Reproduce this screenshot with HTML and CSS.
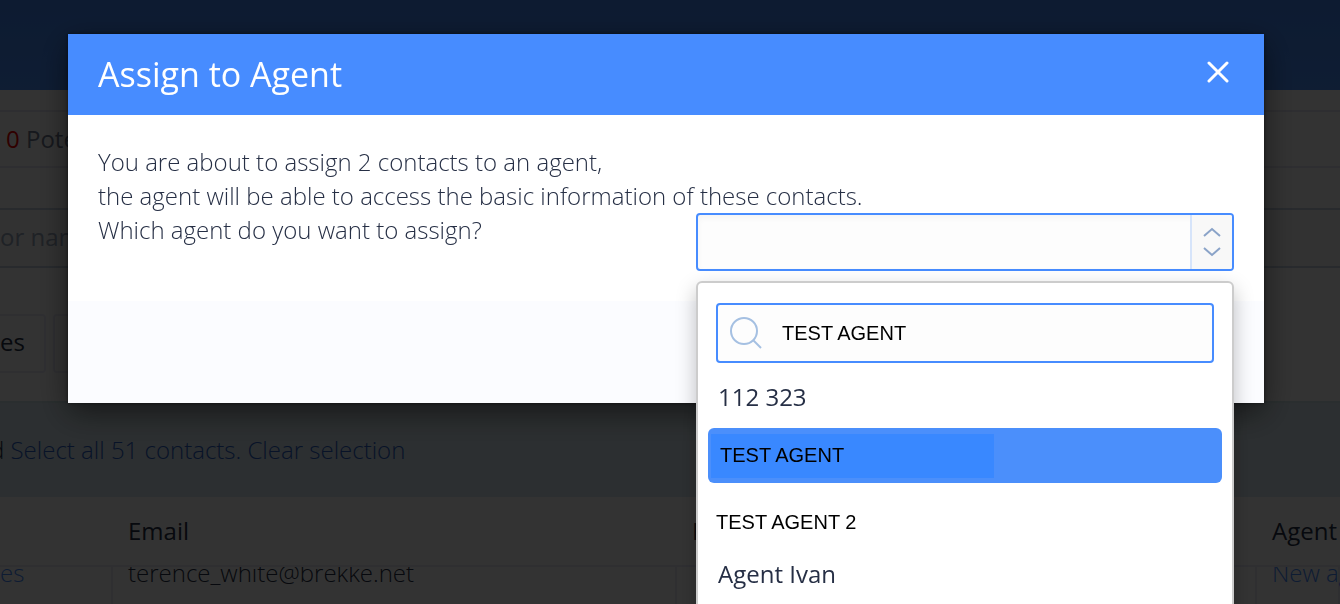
FILE: index.html
```html
<!DOCTYPE html>
<html lang="en">
<head>
    <meta charset="UTF-8">
    <meta name="viewport" content="width=device-width, initial-scale=1.0">
    <title>Contacts - Assign to Agent</title>
    <link rel="stylesheet" href="styles.css">
</head>
<body>
    <header class="topbar"></header>
    <main class="page">
        <div class="stats"><span class="stat-count">0</span> Potential</div>
        <input type="text" class="filter-input" placeholder="or name" aria-label="Filter contacts">
        <div class="actions">
            <button type="button" class="action-button">es</button>
            <button type="button" class="action-button" aria-label="More"></button>
        </div>
        <div class="selection-bar">
            <span class="selection-text">d <a href="#">Select all 51 contacts.</a> <a href="#">Clear selection</a></span>
        </div>
        <table class="contacts">
            <colgroup>
                <col class="col-name">
                <col class="col-email">
                <col class="col-phone">
                <col>
            </colgroup>
            <thead>
                <tr>
                    <th></th>
                    <th>Email</th>
                    <th>P</th>
                    <th>Agent</th>
                </tr>
            </thead>
            <tbody>
                <tr>
                    <td class="name-cell"><a href="#">es</a></td>
                    <td>terence_white@brekke.net</td>
                    <td></td>
                    <td><a href="#">New agent</a></td>
                </tr>
            </tbody>
        </table>
    </main>

    <div class="overlay">
        <div class="modal" role="dialog" aria-labelledby="modal-title">
            <div class="modal-header">
                <h1 id="modal-title">Assign to Agent</h1>
                <button type="button" class="modal-close" aria-label="Close">
                    <svg width="22" height="22" viewBox="0 0 22 22" fill="none" stroke="#fff" stroke-width="3" stroke-linecap="round">
                        <path d="M2 2L20 20M20 2L2 20"/>
                    </svg>
                </button>
            </div>
            <div class="modal-body">
                <label for="agent">You are about to assign 2 contacts to an agent,<br>
                the agent will be able to access the basic information of these contacts.<br>
                Which agent do you want to assign?</label>
                <div class="picker">
                    <select id="agent" class="picker-select">
                        <option value=""></option>
                    </select>
                    <span class="picker-arrows">
                        <svg width="18" height="30" viewBox="0 0 18 30" fill="none" stroke="#8aa3c8" stroke-width="2">
                            <path d="M1 9L9 2L17 9M1 21L9 28L17 21"/>
                        </svg>
                    </span>
                    <div class="picker-menu">
                        <div class="search">
                            <svg class="search-icon" width="32" height="32" viewBox="0 0 32 32" fill="none" stroke="#a5c0e2" stroke-width="2">
                                <circle cx="14" cy="14" r="13"/>
                                <path d="M23 23L31 31"/>
                            </svg>
                            <input type="text" class="search-input" value="TEST AGENT" aria-label="Search agents">
                        </div>
                        <ul class="options">
                            <li>112 323</li>
                            <li class="active"><span class="match">TEST AGENT</span></li>
                            <li class="plain">TEST AGENT 2</li>
                            <li>Agent Ivan</li>
                        </ul>
                    </div>
                </div>
            </div>
            <div class="modal-footer"></div>
        </div>
    </div>
</body>
</html>
```

FILE: styles.css
```css
* {
    box-sizing: border-box;
}
body {
    font-family: "Open Sans", "Noto Sans", sans-serif;
    font-size: 24px;
    line-height: 34px;
    margin: 0;
    color: #262f45;
    background-color: #ffffff;
    height: 100vh;
    overflow: hidden;
}
a {
    color: #2a62c8;
    text-decoration: none;
}
.topbar {
    height: 90px;
    background: linear-gradient(#4187f5, #4a90ff);
}
.stats {
    margin-top: 20px;
    padding: 10px 6px;
    border-top: 2px solid #e6e6f2;
    border-bottom: 2px solid #e6e6f2;
    color: #6f7a90;
}
.stat-count {
    color: #f00000;
}
.filter-input {
    display: block;
    width: 100%;
    height: 60px;
    margin-top: 40px;
    padding: 0 0 4px;
    border: solid #c6d2e2;
    border-width: 2px 0;
    background-color: #fafafa;
    font: 24px "Open Sans", sans-serif;
}
.filter-input::placeholder {
    color: #9aa8bd;
}
.actions {
    display: flex;
    gap: 7px;
    padding: 46px 0 28px;
}
.action-button {
    width: 120px;
    height: 59px;
    padding: 0 0 4px;
    border: 2px solid #eaeaf6;
    border-radius: 4px;
    background-color: #ffffff;
    color: #262f45;
    font: 24px "Open Sans", sans-serif;
    text-align: left;
}
.action-button:first-child {
    width: 46px;
    border-left: 0;
    border-radius: 0 4px 4px 0;
}
.selection-bar {
    height: 96px;
    padding: 30px 0;
    border-top: 2px solid #cfe6ea;
    background-color: #dcebf2;
    font-weight: 300;
}
.selection-text {
    margin-left: -10px;
}
.contacts {
    width: 100%;
    table-layout: fixed;
    border-collapse: separate;
    border-spacing: 0;
    white-space: nowrap;
}
.col-name {
    width: 113px;
}
.col-email {
    width: 564px;
}
.col-phone {
    width: 580px;
}
.contacts th {
    position: relative;
    z-index: 1;
    height: 70px;
    padding: 0 15px;
    border-bottom: 2px solid #eaeaf6;
    background-color: #ffffff;
    font-weight: 400;
    text-align: left;
}
/* rows are scrolled under the header */
.contacts td {
    height: 60px;
    padding: 0 15px;
    border-right: 2px solid #eaeaf6;
    font-weight: 300;
    line-height: 12px;
    vertical-align: top;
}
.contacts td a {
    color: #478cff;
}
.contacts .name-cell {
    padding: 0 90px 0 0;
    text-align: right;
}
.overlay {
    position: fixed;
    inset: 0;
    z-index: 10;
    padding: 34px 76px 0 68px;
    background-color: rgba(0, 0, 0, 0.8);
}
.modal {
    background-color: #ffffff;
    box-shadow: 0 10px 30px rgba(0, 0, 0, 0.5), 0 0 4px rgba(0, 0, 0, 0.5);
}
.modal-header {
    display: flex;
    justify-content: space-between;
    align-items: center;
    height: 81px;
    padding: 0 30px 2px;
    background-color: #478cff;
    color: #ffffff;
}
.modal-header h1 {
    margin: 0;
    font-size: 34px;
    font-weight: 400;
}
.modal-close {
    display: flex;
    padding: 0 5px 4px;
    border: 0;
    background: none;
    cursor: pointer;
}
.modal-body {
    padding: 30px;
    font-weight: 300;
}
.modal-body label {
    display: block;
}
.modal-footer {
    height: 102px;
    background-color: #fbfcff;
}
.picker {
    position: relative;
    width: 538px;
    margin: -34px 0 0 auto;
}
.picker-select {
    display: block;
    width: 100%;
    height: 58px;
    border: 2px solid #478cff;
    border-radius: 4px;
    background-color: #fdfdfd;
    box-shadow: inset 0 3px 6px rgba(0, 0, 0, 0.04);
    appearance: none;
}
.picker-arrows {
    position: absolute;
    top: 2px;
    right: 2px;
    display: flex;
    justify-content: center;
    align-items: center;
    width: 42px;
    height: 54px;
    border-left: 2px solid #d6e4fa;
    border-radius: 0 2px 2px 0;
    background-color: #f8f8f8;
    pointer-events: none;
}
.picker-menu {
    position: absolute;
    top: 68px;
    left: 0;
    width: 100%;
    padding: 20px 10px;
    border: 2px solid #cccccc;
    border-radius: 6px;
    background-color: #ffffff;
    box-shadow: 0 8px 20px rgba(0, 0, 0, 0.25);
    font-weight: 400;
}
.search {
    display: flex;
    align-items: center;
    gap: 20px;
    height: 60px;
    margin: 0 8px;
    padding: 0 12px;
    border: 2px solid #478cff;
    border-radius: 4px;
    background-color: #fdfdfd;
}
.search-icon {
    flex: none;
}
.search-input {
    flex: 1;
    padding: 0;
    border: 0;
    outline: none;
    background: none;
    color: #000000;
    font: 20px "Liberation Sans", Arial, sans-serif;
}
.options {
    display: flex;
    flex-direction: column;
    gap: 4px;
    margin: 6px 0 0;
    padding: 0;
    list-style: none;
}
.options li {
    display: flex;
    align-items: center;
    height: 55px;
    padding: 0 10px;
    border-radius: 6px;
}
.options .active {
    padding: 0 3px;
    background-color: #4b8ffb;
}
.match {
    width: 283px;
    height: 44px;
    padding: 4px 9px;
    background-color: #3988ff;
}
.match, .options .plain {
    color: #000000;
    font-family: "Liberation Sans", Arial, sans-serif;
    font-size: 20px;
}
.options .plain {
    padding: 14px 8px 0;
}
```
